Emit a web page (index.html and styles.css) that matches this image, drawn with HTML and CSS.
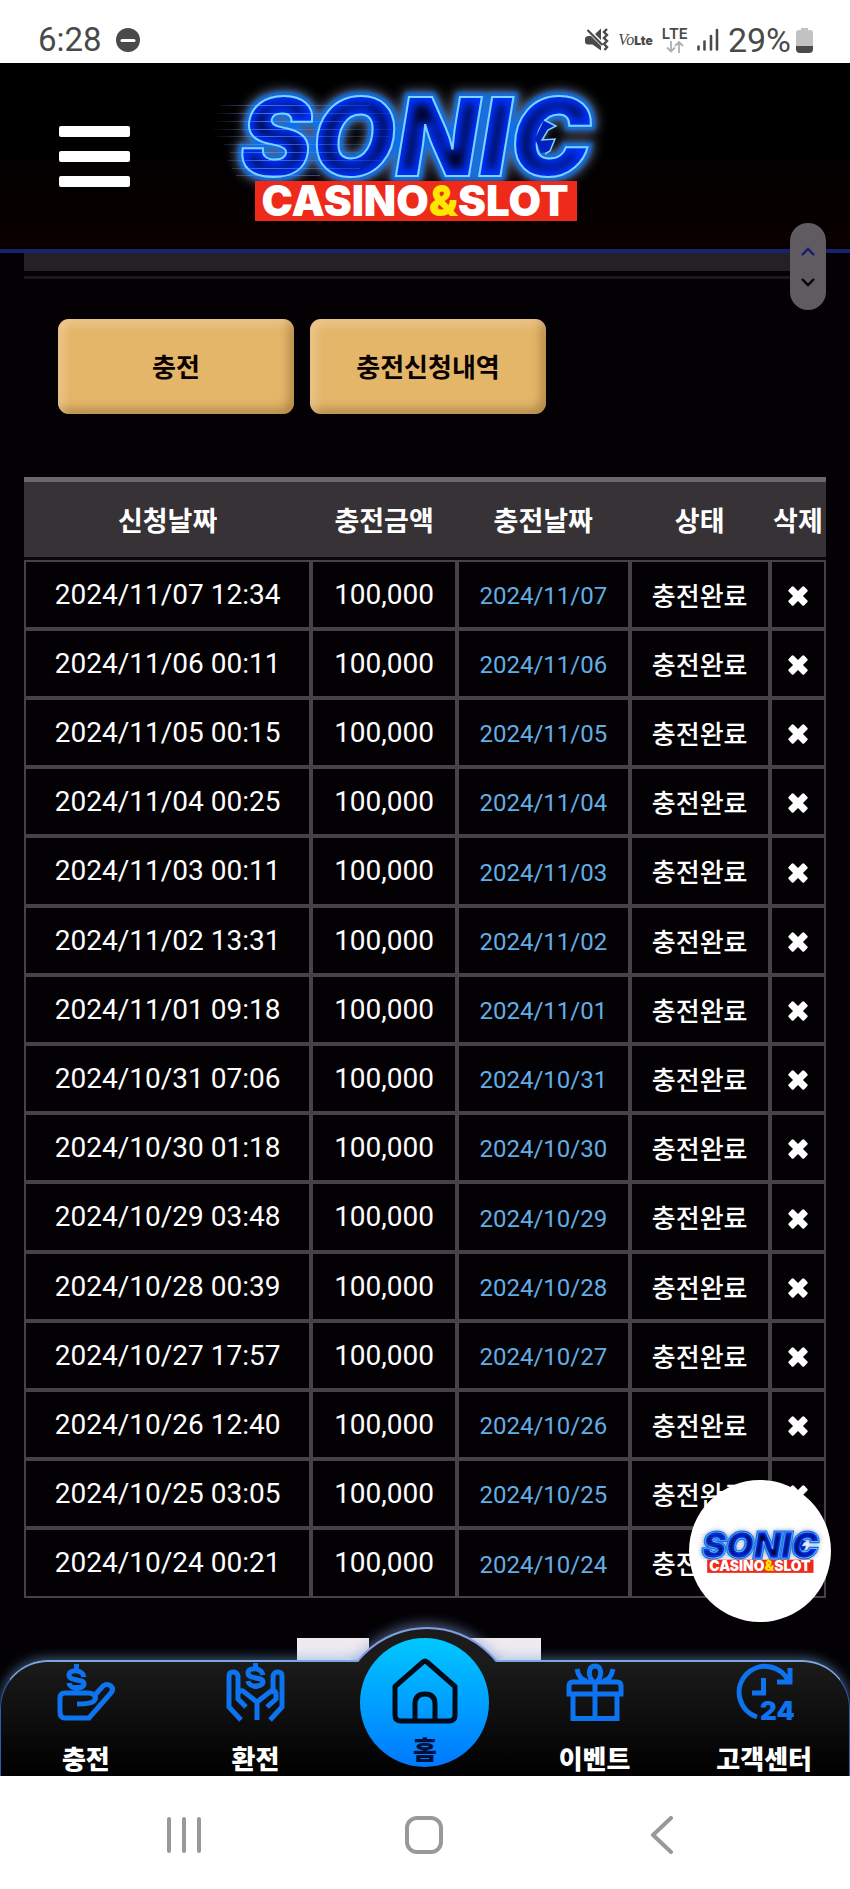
FILE: index.html
```html
<!DOCTYPE html>
<html lang="ko">
<head>
<meta charset="utf-8">
<meta name="viewport" content="width=device-width, initial-scale=1">
<title>SONIC CASINO&amp;SLOT</title>
<link rel="stylesheet" href="styles.css">
</head>
<body>
<svg class="defs" width="0" height="0" aria-hidden="true">
  <defs>
    <filter id="soft" x="-20%" y="-40%" width="140%" height="180%"><feGaussianBlur stdDeviation="6"/></filter>
    <filter id="tight" x="-20%" y="-40%" width="140%" height="180%"><feGaussianBlur stdDeviation="2"/></filter>
    <filter id="inner" x="-20%" y="-40%" width="140%" height="180%"><feGaussianBlur stdDeviation="4"/></filter>
    <linearGradient id="speed" gradientUnits="userSpaceOnUse" x1="10" y1="0" x2="230" y2="0">
      <stop offset="0" stop-color="#5a7fd0" stop-opacity="0"/>
      <stop offset=".25" stop-color="#5a8fff" stop-opacity=".7"/>
      <stop offset="1" stop-color="#2f6cff" stop-opacity="0"/>
    </linearGradient>
    <clipPath id="word"><text class="logo-word" x="40" y="106">SONIC</text></clipPath>
    <symbol id="logo" viewBox="0 0 430 170">
      <text class="logo-word logo-halo" x="40" y="106">SONIC</text>
      <text class="logo-word logo-glow" x="40" y="106">SONIC</text>
      <text class="logo-word logo-fill" x="40" y="106">SONIC</text>
      <g clip-path="url(#word)"><text class="logo-word logo-inner" x="40" y="106">SONIC</text></g>
      <path d="M20 35.500H170M14 43.500H200M16 51.500H180M12 59.500H210M14 66.500H190M24 74.500H170M30 82.500H160M28 90.500H190M32 98.500H160M36 105.500H120" stroke="url(#speed)"/>
      <text class="logo-word logo-line" x="40" y="106">SONIC</text>
      <path d="M344 50l12 6-8 4-6 10 13-1-5 12-9 2-6-14z" fill="#0020c0"/>
      <path d="M344 50l12 6-8 4-6 10 13-1-5 12-5 3" fill="none" stroke="#7cd4ff" stroke-width="1.500"/>
      <rect x="55" y="111" width="322" height="40" fill="#ee2a1b"/>
      <text class="logo-sub" x="215" y="146">CASINO<tspan fill="#ffe600">&amp;</tspan>SLOT</text>
    </symbol>
    <symbol id="x" viewBox="0 0 20 20">
      <g fill="#fff" transform="rotate(45 10 10)"><rect x="-1" y="6.500" width="22" height="7" rx="1.500"/><rect x="6.500" y="-1" width="7" height="22" rx="1.500"/></g>
    </symbol>
  </defs>
</svg>

<div class="status">
  <div class="status-group">
    <span class="status-text">6:28</span>
    <svg width="24" height="24" viewBox="0 0 24 24"><circle cx="12" cy="12" r="12" fill="#4a4a4a"/><path d="M6 12.500h12" stroke="#fff" stroke-width="3" stroke-linecap="round"/></svg>
  </div>
  <div class="status-group status-right">
    <svg width="24" height="24" viewBox="0 0 24 24" fill="none" stroke="#4a4a4a"><path d="M0 11q0-3 4-3l2 0 10 10v4.500L7.500 16.500H3q-3 0-3-3zM10 6l6-5.500V12z" fill="#4a4a4a" stroke="none"/><path d="M2.500 2l15 15" stroke-width="2.200"/><path d="M22 1l-3 3 3 3-3 3 3 3-3 3 3 3-2.500 3" stroke-width="2.400"/></svg>
    <span class="volte"><i>Vo</i><b>Lte</b></span>
    <span class="lte"><b>LTE</b><svg width="20" height="12" viewBox="0 0 20 12" fill="none" stroke="#b0b0b0" stroke-width="1.800"><path d="M6 0v10.500M2 6.500l4 4 4-4M14 12V1M10 5l4-4 4 4"/></svg></span>
    <svg width="22" height="24" viewBox="0 0 22 24" stroke="#4a4a4a" stroke-width="2.600" stroke-linecap="round"><path d="M1.500 18.500v3M7.500 13.500v8M14 8v13.500M20 2v19.500"/></svg>
    <span class="status-text">29%</span>
    <svg width="17" height="25" viewBox="0 0 17 25"><path d="M5 0h7v2h2q3 0 3 3v14H0V5q0-3 3-3h2z" fill="#c2c2c2"/><path d="M0 18h17v3q0 4-4 4H4q-4 0-4-4z" fill="#4a4a4a"/></svg>
  </div>
</div>

<header class="header">
  <button class="menu" type="button" aria-label="메뉴"><span></span><span></span><span></span></button>
  <a class="brand" href="#" aria-label="SONIC CASINO&amp;SLOT"><svg viewBox="0 0 430 170"><use href="#logo"/></svg></a>
  <div class="scroller">
    <button type="button" aria-label="위로"><svg width="14" height="9" viewBox="0 0 14 9"><path d="M1 8l6-6 6 6" fill="none" stroke="#141c70" stroke-width="2.400"/></svg></button>
    <button type="button" aria-label="아래로"><svg width="14" height="9" viewBox="0 0 14 9"><path d="M1 1l6 6 6-6" fill="none" stroke="#000" stroke-width="2.400"/></svg></button>
  </div>
</header>

<main class="main">
  <div class="strip"></div>
  <div class="actions">
    <button type="button">충전</button>
    <button type="button">충전신청내역</button>
  </div>
  <table class="history">
    <colgroup><col class="c1"><col class="c2"><col class="c3"><col class="c4"><col class="c5"></colgroup>
    <thead><tr><th>신청날짜</th><th>충전금액</th><th>충전날짜</th><th>상태</th><th>삭제</th></tr></thead>
    <tbody>
      <tr><td>2024/11/07 12:34</td><td>100,000</td><td class="day">2024/11/07</td><td class="state">충전완료</td><td><button type="button" aria-label="삭제"><svg><use href="#x"/></svg></button></td></tr>
      <tr><td>2024/11/06 00:11</td><td>100,000</td><td class="day">2024/11/06</td><td class="state">충전완료</td><td><button type="button" aria-label="삭제"><svg><use href="#x"/></svg></button></td></tr>
      <tr><td>2024/11/05 00:15</td><td>100,000</td><td class="day">2024/11/05</td><td class="state">충전완료</td><td><button type="button" aria-label="삭제"><svg><use href="#x"/></svg></button></td></tr>
      <tr><td>2024/11/04 00:25</td><td>100,000</td><td class="day">2024/11/04</td><td class="state">충전완료</td><td><button type="button" aria-label="삭제"><svg><use href="#x"/></svg></button></td></tr>
      <tr><td>2024/11/03 00:11</td><td>100,000</td><td class="day">2024/11/03</td><td class="state">충전완료</td><td><button type="button" aria-label="삭제"><svg><use href="#x"/></svg></button></td></tr>
      <tr><td>2024/11/02 13:31</td><td>100,000</td><td class="day">2024/11/02</td><td class="state">충전완료</td><td><button type="button" aria-label="삭제"><svg><use href="#x"/></svg></button></td></tr>
      <tr><td>2024/11/01 09:18</td><td>100,000</td><td class="day">2024/11/01</td><td class="state">충전완료</td><td><button type="button" aria-label="삭제"><svg><use href="#x"/></svg></button></td></tr>
      <tr><td>2024/10/31 07:06</td><td>100,000</td><td class="day">2024/10/31</td><td class="state">충전완료</td><td><button type="button" aria-label="삭제"><svg><use href="#x"/></svg></button></td></tr>
      <tr><td>2024/10/30 01:18</td><td>100,000</td><td class="day">2024/10/30</td><td class="state">충전완료</td><td><button type="button" aria-label="삭제"><svg><use href="#x"/></svg></button></td></tr>
      <tr><td>2024/10/29 03:48</td><td>100,000</td><td class="day">2024/10/29</td><td class="state">충전완료</td><td><button type="button" aria-label="삭제"><svg><use href="#x"/></svg></button></td></tr>
      <tr><td>2024/10/28 00:39</td><td>100,000</td><td class="day">2024/10/28</td><td class="state">충전완료</td><td><button type="button" aria-label="삭제"><svg><use href="#x"/></svg></button></td></tr>
      <tr><td>2024/10/27 17:57</td><td>100,000</td><td class="day">2024/10/27</td><td class="state">충전완료</td><td><button type="button" aria-label="삭제"><svg><use href="#x"/></svg></button></td></tr>
      <tr><td>2024/10/26 12:40</td><td>100,000</td><td class="day">2024/10/26</td><td class="state">충전완료</td><td><button type="button" aria-label="삭제"><svg><use href="#x"/></svg></button></td></tr>
      <tr><td>2024/10/25 03:05</td><td>100,000</td><td class="day">2024/10/25</td><td class="state">충전완료</td><td><button type="button" aria-label="삭제"><svg><use href="#x"/></svg></button></td></tr>
      <tr><td>2024/10/24 00:21</td><td>100,000</td><td class="day">2024/10/24</td><td class="state">충전완료</td><td><button type="button" aria-label="삭제"><svg><use href="#x"/></svg></button></td></tr>
    </tbody>
  </table>
  <div class="pager"><span></span><span></span></div>
  <a class="bubble" href="#" aria-label="SONIC"><svg viewBox="0 0 430 170"><use href="#logo"/></svg></a>
</main>

<nav class="tabs">
  <a href="#">
    <svg viewBox="0 0 58 58" fill="none" stroke="#0d73ee" stroke-width="5"><path d="M20 41q14 0 17-3 3-3 0-6-2-2-6-2H8q-5 0-5 5v14q0 6 5 6h24L54 30q3-4 0-7-4-3-8 0L37 33"/><path d="M27 14c-1-8-15-8-15-2 0 7 15 3 15 9 0 5-14 6-15-1M19.500 1v5M19.500 22v8"/></svg>
    <span>충전</span>
  </a>
  <a href="#">
    <svg viewBox="0 0 58 58" fill="none" stroke="#0d73ee" stroke-width="5"><path d="M31 57V39L17 28q-4-1-5 2v6l8 8M31 39l14-11q4-1 5 2v6l-9 8"/><path d="M15 57L3 44V13q0-4 4-4t5 4v18M44 57l12-13V13q0-4-4-4t-5 4v18"/><path d="M37 12c-1-8-15-8-15-2 0 7 15 3 15 9 0 5-14 6-15-1M29.500 0v4M29.500 22v4"/></svg>
    <span>환전</span>
  </a>
  <a class="home" href="#">
    <svg viewBox="0 0 66 66" fill="none" stroke="#020a18" stroke-width="5"><path d="M3 28.500L31 4q2-2 4 0l28 24.500V57q0 6-6 6H9q-6 0-6-6zM23 63V46q0-10 10-10t10 10v17" stroke-linejoin="round"/></svg>
    <span>홈</span>
  </a>
  <a href="#">
    <svg viewBox="0 0 58 58" fill="none" stroke="#0d73ee" stroke-width="5"><path d="M7 33v22.500h44V33M29 20v35M3 31V23q0-4 4-4h44q4 0 4 4v8zM27 19c-6-8-4-16 2-16s8 8 2 16M11 6q2 11 10 12M47 6q-2 11-10 12"/></svg>
    <span>이벤트</span>
  </a>
  <a href="#">
    <svg viewBox="0 0 58 58" fill="none" stroke="#0d73ee" stroke-width="5"><path d="M22 54A26 26 0 1 1 54 19M42 19h13V5M28.500 15v15H17"/><text class="badge24" x="25" y="57">24</text></svg>
    <span>고객센터</span>
  </a>
</nav>

<div class="system">
  <button type="button" aria-label="최근 앱"><svg width="38" height="38" viewBox="0 0 38 38"><path d="M4 3v32M19 3v32M34 3v32"/></svg></button>
  <button type="button" aria-label="홈 화면"><svg width="38" height="38" viewBox="0 0 38 38"><rect x="2" y="2" width="34" height="34" rx="10"/></svg></button>
  <button type="button" aria-label="뒤로"><svg width="38" height="38" viewBox="0 0 38 38"><path d="M26 2L8 19l18 17"/></svg></button>
</div>
</body>
</html>
```
FILE: styles.css
```css
* { box-sizing: border-box; }

body {
  margin: 0;
  min-height: 100vh;
  display: flex;
  flex-direction: column;
  background: #030104;
  font-family: Roboto, "Noto Sans CJK KR", sans-serif;
  color: #fff;
}

button {
  border: 0;
  padding: 0;
  background: none;
  font: inherit;
  color: inherit;
}

a { color: inherit; text-decoration: none; }
svg { display: block; }
.defs { position: absolute; }

/* Device status bar */
.status {
  height: 63px;
  padding: 16px 37px 0 38px;
  display: flex;
  justify-content: space-between;
  background: #fff;
  color: #4a4a4a;
}
.status-group { display: flex; align-items: center; gap: 14px; height: 48px; }
.status-right { gap: 9px; }
.status-text { font-size: 33px; line-height: 48px; }
.status-right .status-text { font-size: 34px; margin-right: -4px; }
.volte { display: flex; align-items: baseline; }
.volte i { font-family: "Liberation Serif", serif; font-size: 16px; }
.volte b { font-family: Inter, sans-serif; font-weight: 900; font-size: 12px; }
.lte { display: flex; flex-direction: column; align-items: center; font-size: 15px; line-height: 14px; font-family: Inter, sans-serif; }
.lte b { font-weight: 600; }

/* Site header */
.header {
  position: relative;
  height: 190px;
  display: flex;
  align-items: flex-start;
  justify-content: center;
  padding-top: 7px;
  background: linear-gradient(#000 45%, #0a0000);
  border-bottom: 4px solid #16246b;
}
.menu {
  position: absolute;
  left: 59px;
  top: 63px;
  width: 71px;
  display: flex;
  flex-direction: column;
  gap: 14px;
}
.menu span { height: 11px; border-radius: 2px; background: #fff; }
.brand { width: 430px; margin-right: 20px; }
.scroller {
  position: absolute;
  z-index: 2;
  right: 24px;
  top: 160px;
  width: 36px;
  height: 87px;
  padding: 24px 0 23px;
  display: flex;
  flex-direction: column;
  align-items: center;
  justify-content: space-between;
  border-radius: 18px;
  background: #5f5b60;
}

.logo-word { font: italic 900 108px Inter, sans-serif; }
.logo-halo { fill: #8a93b8; stroke: #8a93b8; stroke-width: 12px; opacity: .7; filter: url(#soft); }
.logo-glow { fill: #0f6fe8; stroke: #0f6fe8; stroke-width: 9px; filter: url(#tight); }
.logo-fill { fill: #00052e; }
.logo-inner { fill: none; stroke: #0030ff; stroke-width: 14px; filter: url(#inner); }
.logo-line { fill: none; stroke: #7cd4ff; stroke-width: 2px; }
.logo-sub { font: 900 42px Inter, sans-serif; fill: #fff; text-anchor: middle; }

/* Page content */
.main {
  position: relative;
  flex: 1;
  padding: 0 24px;
  display: flex;
  flex-direction: column;
}
.strip {
  height: 26px;
  border-bottom: 3px solid #1a181a;
  background: linear-gradient(#242124 18px, #030104 18px);
}
.actions {
  display: flex;
  gap: 16px;
  padding: 40px 34px 63px;
}
.actions button {
  width: 236px;
  height: 95px;
  padding-bottom: 3px;
  border-radius: 11px;
  background: #e3b66a;
  box-shadow: inset 5px 5px 10px rgba(255, 230, 200, .4), inset -5px -5px 10px rgba(110, 70, 20, .4);
  color: #0a0200;
  font-size: 26px;
  font-weight: 700;
}

.history {
  width: 100%;
  table-layout: fixed;
  border-collapse: separate;
  border-spacing: 0;
  text-align: center;
}
.c1 { width: 35.8%; }
.c2 { width: 18.2%; }
.c3 { width: 21.5%; }
.c4 { width: 17.5%; }
.c5 { width: 7%; }
.history th {
  height: 83px;
  padding: 4px 0 0;
  border-top: 5px solid #6b666b;
  border-bottom: 3px solid #0a070a;
  background: #373236;
  font-size: 27px;
  font-weight: 700;
  line-height: 40px;
  white-space: nowrap;
}
.history td {
  height: 69px;
  padding: 0;
  border: 2px solid #464246;
  font-size: 28px;
  line-height: 32px;
}
.history tr:nth-child(5n) td { height: 70px; }
.history .day { padding-top: 3px; color: #62aee4; font-size: 24px; }
.history .state { padding-top: 4px; font-size: 26px; font-weight: 500; }
.history td button { display: block; margin: 3px auto 0; }
.history td svg { width: 20px; height: 20px; }

.pager {
  display: flex;
  justify-content: center;
  gap: 100px;
  margin: auto 12px 0 0;
}
.pager span { width: 72px; height: 22px; background: #f0eaf0; }

.bubble {
  position: absolute;
  right: 19px;
  bottom: 38px;
  width: 142px;
  height: 142px;
  display: flex;
  align-items: center;
  border-radius: 50%;
  background: #fff;
}
.bubble svg { width: 142px; }

/* Tab bar */
.tabs {
  position: relative;
  display: grid;
  grid-template-columns: repeat(5, 1fr);
  height: 116px;
  border: 1px solid #2d5ca8;
  border-top: 2px solid #7ba6e0;
  border-bottom: 0;
  border-radius: 48px 48px 0 0;
  background: linear-gradient(#1c1b1c, #000);
  box-shadow: 0 -2px 12px rgba(110, 165, 220, .55);
}
.tabs::before {
  content: "";
  position: absolute;
  left: 50%;
  top: -35px;
  width: 176px;
  height: 176px;
  margin-left: -88px;
  border: 2px solid #7f9fe0;
  border-radius: 50%;
  background: #1c1b1c;
  box-shadow: 0 -4px 12px rgba(130, 160, 220, .5);
  clip-path: polygon(0 -20px, 176px -20px, 176px 24px, 158px 35px, 18px 35px, 0 24px);
}
.tabs a {
  position: relative;
  display: flex;
  flex-direction: column;
  align-items: center;
  gap: 20px;
  padding-top: 1px;
  font-size: 26px;
  line-height: 38px;
  font-weight: 900;
  white-space: nowrap;
}
.tabs a svg { width: 58px; height: 58px; flex: none; overflow: visible; }
.badge24 { font: 900 26px Inter, sans-serif; fill: #0d73ee; stroke: none; }
.tabs .home {
  justify-self: center;
  width: 129px;
  height: 129px;
  margin-top: -24px;
  padding-top: 20px;
  gap: 8px;
  border-radius: 50%;
  background: linear-gradient(#00c8ff, #0078ff);
  color: #04103c;
}
.tabs .home svg { width: 66px; height: 66px; }

/* Device navigation */
.system {
  position: relative;
  z-index: 1;
  display: grid;
  grid-template-columns: repeat(3, 1fr);
  align-items: center;
  justify-items: center;
  height: 113px;
  padding: 4px 66px 0 64px;
  background: #fff;
}
.system svg { fill: none; stroke: #999; stroke-width: 4px; stroke-linecap: round; stroke-linejoin: round; }
```
